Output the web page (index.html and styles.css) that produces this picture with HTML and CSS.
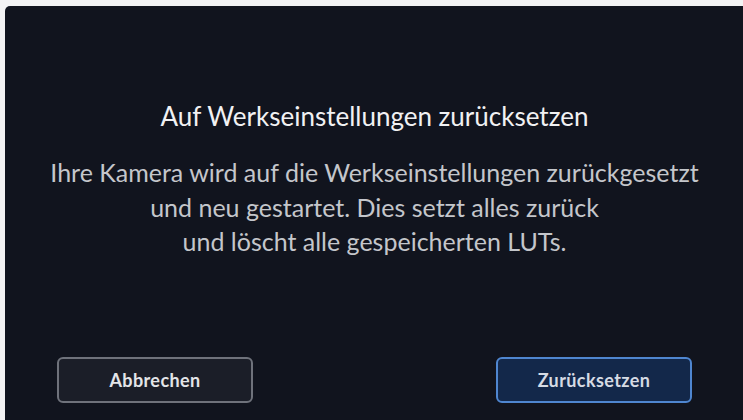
FILE: index.html
```html
<!DOCTYPE html>
<html lang="de">
<head>
<meta charset="utf-8">
<title>Auf Werkseinstellungen zurücksetzen</title>
<link rel="stylesheet" href="styles.css">
</head>
<body>
<div class="screen">
  <h1 class="title">Auf Werkseinstellungen zurücksetzen</h1>
  <p class="message">Ihre Kamera wird auf die Werkseinstellungen zurückgesetzt<br>und neu gestartet. Dies setzt alles zurück<br>und löscht alle gespeicherten LUTs.</p>
  <div class="actions">
    <button class="btn btn-cancel">Abbrechen</button>
    <button class="btn btn-confirm">Zurücksetzen</button>
  </div>
</div>
</body>
</html>
```
FILE: styles.css
```css
html, body {
  margin: 0;
  padding: 0;
  height: 100%;
}
body {
  background: #f3f3f4;
  font-family: Lato, "Open Sans", sans-serif;
  overflow: hidden;
}
.screen {
  box-sizing: border-box;
  margin: 6px 0 0 5px;
  height: 414px;
  background: #11141e;
  border-top-left-radius: 5px;
  display: flex;
  flex-direction: column;
  align-items: center;
  padding: 95px 51px 17px 52px;
}
.title {
  margin: 0;
  font-size: 26px;
  line-height: 30px;
  font-weight: 400;
  color: #f1f1f3;
  white-space: nowrap;
}
.message {
  margin: 24px 0 0;
  font-size: 25px;
  line-height: 34.5px;
  font-weight: 400;
  color: #c4c6cb;
  text-align: center;
  white-space: nowrap;
}
.actions {
  margin-top: auto;
  align-self: stretch;
  display: flex;
  justify-content: space-between;
}
.btn {
  box-sizing: border-box;
  width: 196px;
  height: 46px;
  border-radius: 6px;
  font-family: Lato, "Open Sans", sans-serif;
  font-size: 18px;
  font-weight: 700;
  letter-spacing: 0.4px;
  color: #e4e5e8;
  padding: 0;
}
.btn-cancel {
  background: #1b1e28;
  border: 2px solid #6f727b;
}
.btn-confirm {
  background: #13284a;
  border: 2px solid #4f86d0;
  color: #d6dbe4;
}
```
